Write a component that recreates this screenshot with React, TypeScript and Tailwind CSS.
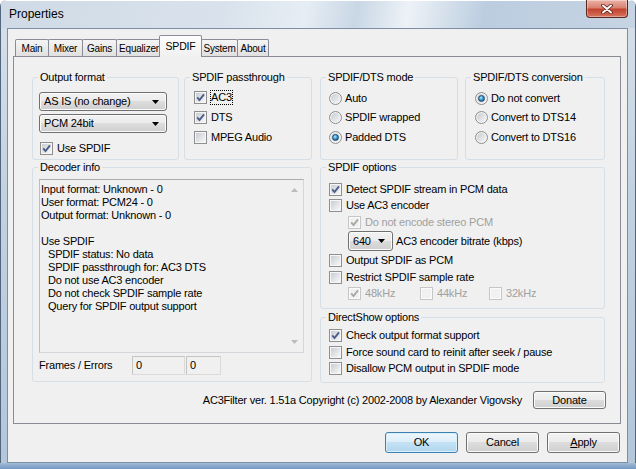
import type { ReactNode } from 'react'

// Vista-style "Properties" dialog of AC3Filter, SPDIF tab.

const BTN =
  'flex items-center justify-center rounded-[3px] border border-[#707070] bg-[linear-gradient(#f2f2f2_0%,#ebebeb_49%,#dddddd_50%,#cfcfcf_100%)] shadow-[inset_0_0_0_1px_#fbfbfb]'

function Tick({ disabled }: { disabled?: boolean }) {
  return (
    <svg width="9" height="9" viewBox="0 0 9 9">
      <path
        d="M1.2 4.4 L3.5 7.1 L8 1.3"
        fill="none"
        stroke={disabled ? '#a8a8a8' : '#4b5d8b'}
        strokeWidth="1.9"
      />
    </svg>
  )
}

function Check({
  label,
  checked,
  disabled,
  focus,
}: {
  label: string
  checked?: boolean
  disabled?: boolean
  focus?: boolean
}) {
  return (
    <div className="flex h-[16px] items-center whitespace-nowrap">
      <span
        className={`flex h-[13px] w-[13px] shrink-0 items-center justify-center border p-px ${
          disabled ? 'border-[#c6c6c6] bg-[#fbfbfb]' : 'border-[#8f8f8f] bg-[#f6f6f6]'
        }`}
      >
        <span
          className={`flex h-[9px] w-[9px] items-center justify-center ${
            disabled ? 'bg-[#f1f1f1]' : 'bg-[linear-gradient(135deg,#c9cdd3,#f7f7f7)]'
          }`}
        >
          {checked && <Tick disabled={disabled} />}
        </span>
      </span>
      <span
        className={`ml-[4px] leading-[13px] ${disabled ? 'text-[#a0a0a0]' : ''} ${
          focus ? 'outline outline-1 outline-dotted outline-black' : ''
        }`}
      >
        {label}
      </span>
    </div>
  )
}

function Radio({ label, on }: { label: string; on?: boolean }) {
  return (
    <div className="flex h-[16px] items-center whitespace-nowrap">
      <span className="flex h-[13px] w-[13px] shrink-0 items-center justify-center rounded-full border border-[#8f8f8f] bg-[linear-gradient(135deg,#c2c7cd,#fafafa)] shadow-[inset_0_0_0_1px_#f6f6f6]">
        {on && (
          <span className="h-[7px] w-[7px] rounded-full border border-[#1d4c70] bg-[radial-gradient(circle_at_40%_35%,#b6ecff_0%,#3c9bd3_45%,#0d3e64_100%)]" />
        )}
      </span>
      <span className="ml-[3px]">{label}</span>
    </div>
  )
}

function Arrow() {
  return (
    <svg width="7" height="4" viewBox="0 0 7 4">
      <path d="M0 0 H7 L3.5 4 Z" fill="#000" />
    </svg>
  )
}

function Combo({ value, className }: { value: string; className: string }) {
  return (
    <div
      className={`flex items-center justify-between rounded-[3px] border border-[#707070] bg-[linear-gradient(#f2f2f2_0%,#ebebeb_49%,#dddddd_50%,#cfcfcf_100%)] pl-[4px] pr-[7px] shadow-[inset_0_0_0_1px_#fbfbfb] ${className}`}
    >
      <span className="whitespace-nowrap">{value}</span>
      <Arrow />
    </div>
  )
}

function Group({
  title,
  className,
  children,
}: {
  title: string
  className: string
  children: ReactNode
}) {
  return (
    <fieldset className={`rounded-[3px] border border-[#d5dfe5] ${className}`}>
      <legend className="ml-[5px] px-[2px] leading-[13px]">{title}</legend>
      {children}
    </fieldset>
  )
}

function Tab({ label, className }: { label: string; className: string }) {
  return (
    <div
      className={`-ml-px flex h-[17px] items-center justify-center whitespace-nowrap rounded-t-[2px] border border-b-0 border-[#898c95] bg-[linear-gradient(#f5f5f5,#e0e0e0)] pt-px text-[10px] ${className}`}
    >
      {label}
    </div>
  )
}

const decoderLines: [string, boolean][] = [
  ['Input format: Unknown - 0', false],
  ['User format: PCM24 - 0', false],
  ['Output format: Unknown - 0', false],
  ['\u00a0', false],
  ['Use SPDIF', false],
  ['SPDIF status: No data', true],
  ['SPDIF passthrough for: AC3 DTS', true],
  ['Do not use AC3 encoder', true],
  ['Do not check SPDIF sample rate', true],
  ['Query for SPDIF output support', true],
]

export default function App() {
  return (
    <div className="flex h-[469px] w-[636px] flex-col overflow-hidden rounded-t-[7px] bg-[linear-gradient(#d7e1eb,#c3d2e1_40%,#b3c6da)] font-['Liberation_Sans',Arial,sans-serif] text-[11px] leading-[13px] tracking-[-0.2px] text-black shadow-[inset_0_0_0_1px_#52667d]">
      {/* title bar */}
      <div className="flex h-[28px] shrink-0 bg-[linear-gradient(100deg,#cfdae6_0%,#d9e2ec_35%,#e6edf4_48%,#c9d7e5_56%,#edf2f7_64%,#bccde0_76%,#c6d4e3_100%)] shadow-[inset_0_1px_0_#ffffff,inset_1px_0_0_#52667d,inset_-1px_0_0_#52667d]">
        <span className="ml-[9px] self-center pt-px text-[12px] leading-[15px] tracking-normal">Properties</span>
        <div className="ml-auto mr-[8px] flex h-[18px] w-[42px] items-center justify-center rounded-b-[4px] border border-t-0 border-[#5a2720] bg-[linear-gradient(#eab3a7_0%,#d98371_45%,#c2442e_55%,#d6735d_100%)] shadow-[inset_0_0_0_1px_rgba(255,255,255,0.35)]">
          <svg width="12" height="10" viewBox="0 0 12 10">
            <path d="M2 1.5 L10 8.5 M10 1.5 L2 8.5" stroke="#5a1a12" strokeWidth="3.6" strokeLinecap="round" />
            <path d="M2 1.5 L10 8.5 M10 1.5 L2 8.5" stroke="#ffffff" strokeWidth="2" strokeLinecap="round" />
          </svg>
        </div>
      </div>

      {/* client area */}
      <div className="mx-[7px] flex h-[435px] w-[621px] shrink-0 flex-col border border-[#7b8ea4] bg-[#f0f0f0]">
        {/* tabs */}
        <div className="flex h-[27px] items-end pl-[8px]">
          <Tab label="Main" className="w-[34px]" />
          <Tab label="Mixer" className="w-[35px]" />
          <Tab label="Gains" className="w-[35px]" />
          <Tab label="Equalizer" className="w-[46px]" />
          <div className="relative z-10 -mb-px -ml-[3px] flex h-[22px] w-[43px] items-start justify-center rounded-t-[2px] border border-b-0 border-[#898c95] bg-[linear-gradient(#fdfdfd,#f0f0f0)] pt-[4px] text-[10.5px]">
            SPDIF
          </div>
          <Tab label="System" className="-ml-[2px] w-[37px]" />
          <Tab label="About" className="w-[32px]" />
        </div>

        {/* tab page */}
        <div className="ml-[5px] h-[368px] w-[608px] border border-[#898c95] bg-[#f0f0f0] pl-[18px] pt-[14px]">
          <div className="flex">
            <Group title="Output format" className="h-[89px] w-[147px]">
              <div className="pl-[6px] pt-[8px]">
                <Combo value="AS IS (no change)" className="h-[19px] w-[128px]" />
                <Combo value="PCM 24bit" className="mt-[3px] h-[19px] w-[128px]" />
                <div className="ml-px mt-[7px]">
                  <Check label="Use SPDIF" checked />
                </div>
              </div>
            </Group>
            <Group title="SPDIF passthrough" className="ml-[5px] h-[89px] w-[128px]">
              <div className="flex flex-col gap-[4px] pl-[9px] pt-[5px]">
                <Check label="AC3" checked focus />
                <Check label="DTS" checked />
                <Check label="MPEG Audio" />
              </div>
            </Group>
            <Group title="SPDIF/DTS mode" className="ml-[8px] h-[89px] w-[138px]">
              <div className="flex flex-col gap-[3.5px] pl-[8px] pt-[6px]">
                <Radio label="Auto" />
                <Radio label="SPDIF wrapped" />
                <Radio label="Padded DTS" on />
              </div>
            </Group>
            <Group title="SPDIF/DTS conversion" className="ml-[7px] h-[89px] w-[140px]">
              <div className="flex flex-col gap-[3.5px] pl-[9px] pt-[6px]">
                <Radio label="Do not convert" on />
                <Radio label="Convert to DTS14" />
                <Radio label="Convert to DTS16" />
              </div>
            </Group>
          </div>

          <div className="mt-px flex items-start">
            <Group title="Decoder info" className="h-[221px] w-[280px]">
              <div className="pl-[6px] pt-[5px]">
                <div className="flex h-[174px] w-[265px] border border-[#d3d6db] border-l-[#b9bcc2] border-t-[#abadb3] bg-[#f0f0f0]">
                  <div className="flex-1 pl-[1px] pt-[3px]">
                    {decoderLines.map(([t, indent], i) => (
                      <div key={i} className={`h-[13px] whitespace-nowrap ${indent ? 'pl-[7px]' : ''}`}>
                        {t}
                      </div>
                    ))}
                  </div>
                  <div className="flex w-[17px] flex-col items-center justify-between py-[8px]">
                    <svg width="7" height="4" viewBox="0 0 7 4">
                      <path d="M0 4 H7 L3.5 0 Z" fill="#bcbcbc" />
                    </svg>
                    <svg width="7" height="4" viewBox="0 0 7 4">
                      <path d="M0 0 H7 L3.5 4 Z" fill="#bcbcbc" />
                    </svg>
                  </div>
                </div>
                <div className="mt-[3px] flex h-[19px] items-center">
                  <span className="w-[93px] whitespace-nowrap">Frames / Errors</span>
                  <div className="flex h-[19px] w-[53px] items-center border border-[#dadada] border-l-[#c4c4c4] border-t-[#c4c4c4] pl-[3px]">0</div>
                  <div className="ml-[1px] flex h-[19px] w-[35px] items-center border border-[#dadada] border-l-[#c4c4c4] border-t-[#c4c4c4] pl-[3px]">0</div>
                </div>
              </div>
            </Group>

            <div className="ml-[8px] flex w-[285px] flex-col">
              <Group title="SPDIF options" className="h-[148px]">
                <div className="pl-[8px] pt-[7px]">
                  <Check label="Detect SPDIF stream in PCM data" checked />
                  <Check label="Use AC3 encoder" />
                  <div className="ml-[19px] mt-px">
                    <Check label="Do not encode stereo PCM" checked disabled />
                  </div>
                  <div className="ml-[19px] mt-px flex h-[20px] items-center">
                    <Combo value="640" className="h-[20px] w-[45px]" />
                    <span className="ml-[3px] whitespace-nowrap">AC3 encoder bitrate (kbps)</span>
                  </div>
                  <div className="mt-px">
                    <Check label="Output SPDIF as PCM" />
                  </div>
                  <div className="mt-px">
                    <Check label="Restrict SPDIF sample rate" />
                  </div>
                  <div className="ml-[19px] flex">
                    <div className="w-[72px]">
                      <Check label="48kHz" checked disabled />
                    </div>
                    <div className="w-[69px]">
                      <Check label="44kHz" disabled />
                    </div>
                    <Check label="32kHz" disabled />
                  </div>
                </div>
              </Group>
              <Group title="DirectShow options" className="mt-[2px] h-[72px]">
                <div className="pl-[8px] pt-[3px]">
                  <Check label="Check output format support" checked />
                  <div className="mt-px">
                    <Check label="Force sound card to reinit after seek / pause" />
                  </div>
                  <Check label="Disallow PCM output in SPDIF mode" />
                </div>
              </Group>
            </div>
          </div>

          <div className="mt-[8px] flex items-center justify-end pr-[14px]">
            <span className="whitespace-nowrap">
              AC3Filter ver. 1.51a Copyright (c) 2002-2008 by Alexander Vigovsky
            </span>
            <div className={`ml-[11px] h-[18px] w-[73px] ${BTN}`}>Donate</div>
          </div>
        </div>

        {/* dialog buttons */}
        <div className="mt-[8px] flex justify-end gap-[8px] pr-[7px]">
          <div className="flex h-[21px] w-[73px] items-center justify-center rounded-[3px] border border-[#3c7fb1] bg-[linear-gradient(#eef7fd_0%,#dcedf8_49%,#c4e2f5_50%,#b1d6ef_100%)] shadow-[inset_0_0_0_1px_#d8f0fc]">
            OK
          </div>
          <div className={`h-[21px] w-[73px] ${BTN}`}>Cancel</div>
          <div className={`h-[21px] w-[73px] ${BTN}`}>
            <span>
              <span className="underline">A</span>pply
            </span>
          </div>
        </div>
      </div>

      {/* bottom frame */}
      <div className="flex-1 bg-[linear-gradient(#a3bbd5,#7397c2)]" />
    </div>
  )
}
